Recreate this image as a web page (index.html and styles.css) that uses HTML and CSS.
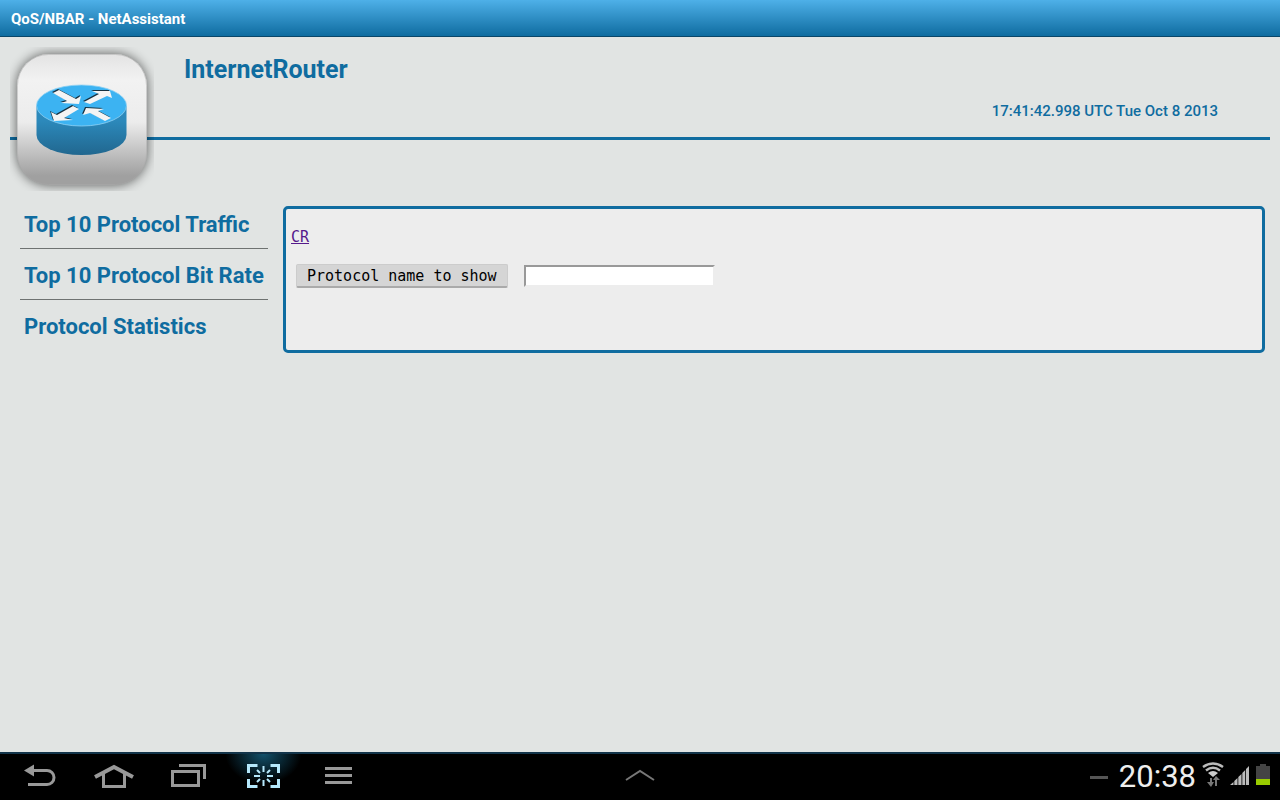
FILE: index.html
```html
<!DOCTYPE html>
<html lang="en">
<head>
    <meta charset="UTF-8">
    <meta name="viewport" content="width=device-width, initial-scale=1.0">
    <title>QoS/NBAR - NetAssistant</title>
    <link rel="stylesheet" href="styles.css">
</head>
<body>
    <div class="title-bar">QoS/NBAR - NetAssistant</div>

    <header class="page-header">
        <svg class="logo" width="144" height="144" viewBox="0 0 144 144" aria-hidden="true">
            <defs>
                <linearGradient id="tile" x1="0" y1="0" x2="0" y2="1">
                    <stop offset="0" stop-color="#e3e3e3"/>
                    <stop offset="0.2" stop-color="#f2f2f2"/>
                    <stop offset="0.52" stop-color="#ececec"/>
                    <stop offset="0.93" stop-color="#a0a0a0"/>
                    <stop offset="1" stop-color="#a0a0a0"/>
                </linearGradient>
                <linearGradient id="side" x1="0" y1="0" x2="0" y2="1">
                    <stop offset="0.3" stop-color="#2c89bb"/>
                    <stop offset="1" stop-color="#21678f"/>
                </linearGradient>
                <filter id="shadow" x="-20%" y="-20%" width="140%" height="140%">
                    <feGaussianBlur stdDeviation="6"/>
                </filter>
            </defs>
            <rect x="7" y="7" width="130" height="131" rx="32" fill="#000" opacity="0.6" filter="url(#shadow)"/>
            <rect x="7" y="7" width="130" height="131" rx="32" fill="url(#tile)"/>
            <rect x="7.500" y="7.500" width="129" height="130" rx="31" fill="none" stroke="#aaa" stroke-opacity="0.5"/>
            <path d="M26.500 59V88A45 20 0 0 0 116.500 88V59Z" fill="url(#side)"/>
            <ellipse cx="71.500" cy="58.500" rx="45" ry="20.500" fill="#3cb3f2" stroke="#8fd0f3" stroke-width="0.800"/>
            <g fill="#16303f" transform="translate(-1 -1)">
                <path d="M43 46L49 43L66 52L71 49L69 57L51 56L57 54Z"/>
                <path d="M74 55L89 47L82 44H100L102 51L97 49L80 57Z"/>
                <path d="M63 59L69 62L54 71L63 73L44 74L41 65L47 68Z"/>
                <path d="M73 68L76 61L94 62L88 64L101 71L95 74L80 66Z"/>
            </g>
            <g fill="#f4f4f4">
                <path d="M43 46L49 43L66 52L71 49L69 57L51 56L57 54Z"/>
                <path d="M74 55L89 47L82 44H100L102 51L97 49L80 57Z"/>
                <path d="M63 59L69 62L54 71L63 73L44 74L41 65L47 68Z"/>
                <path d="M73 68L76 61L94 62L88 64L101 71L95 74L80 66Z"/>
            </g>
        </svg>
        <h1>InternetRouter</h1>
        <p class="clock">17:41:42.998 UTC Tue Oct 8 2013</p>
    </header>

    <div class="content">
        <nav class="side-menu">
            <a href="#traffic">Top 10 Protocol Traffic</a>
            <a href="#bitrate">Top 10 Protocol Bit Rate</a>
            <a href="#statistics">Protocol Statistics</a>
        </nav>

        <main class="panel">
            <a class="cr-link" href="#cr">CR</a>
            <form class="protocol-form">
                <button type="button" id="showProtocol">Protocol name to show</button>
                <input type="text" name="protocol" aria-labelledby="showProtocol">
            </form>
        </main>
    </div>

    <footer class="system-bar">
        <div class="nav-buttons">
            <button type="button" aria-label="Back">
                <svg width="40" height="30" viewBox="0 0 40 30">
                    <path d="M14 9.500H28A7 7 0 0 1 28 23.500H9" fill="none" stroke="#999" stroke-width="3"/>
                    <path d="M5 9.500L15 3.500V15.500Z" fill="#999"/>
                </svg>
            </button>
            <button type="button" aria-label="Home">
                <svg width="40" height="30" viewBox="0 0 40 30">
                    <path d="M1 16L20 6L39 16" fill="none" stroke="#999" stroke-width="4"/>
                    <path d="M9.500 12V25.500H30.500V12" fill="none" stroke="#999" stroke-width="3"/>
                </svg>
            </button>
            <button type="button" aria-label="Recent apps">
                <svg width="40" height="30" viewBox="0 0 40 30">
                    <path d="M10 4.500H35.500V18" fill="none" stroke="#999" stroke-width="3"/>
                    <rect x="3.500" y="10.500" width="26" height="14" fill="none" stroke="#999" stroke-width="3"/>
                </svg>
            </button>
            <button type="button" class="active" aria-label="Screenshot">
                <svg width="40" height="30" viewBox="0 0 40 30" fill="none" stroke="#b5e8fb">
                    <path d="M4.500 12V4.500H13.500M26.500 4.500H34.500V12M34.500 18V25.500H26.500M13.500 25.500H4.500V18" stroke-width="3"/>
                    <path d="M19.500 5V11M19.500 19V25M10 15H16M23 15H29" stroke-width="2"/>
                    <path d="M13 9L16 12M26 9L23 12M13 21L16 18M26 21L23 18" stroke-width="2"/>
                </svg>
            </button>
            <button type="button" aria-label="Menu">
                <svg width="40" height="30" viewBox="0 0 40 30">
                    <path d="M6 7.500H33M6 14.500H33M6 21.500H33" stroke="#999" stroke-width="3"/>
                </svg>
            </button>
        </div>
        <button type="button" class="expand" aria-label="Expand">
            <svg width="32" height="16" viewBox="0 0 32 16">
                <path d="M2 12L16 3L30 12" fill="none" stroke="#777" stroke-width="2"/>
            </svg>
        </button>
        <div class="status">
            <span class="dash"></span>
            <span class="time">20:38</span>
            <svg width="22" height="34" viewBox="0 0 22 34" fill="none" stroke="#bbb">
                <path d="M1 7Q11 0 21 7M4 10.500Q11 5 18 10.500" stroke-width="2.500"/>
                <path d="M6 13Q11 9 16 13L11 17Z" fill="#ccc" stroke="none"/>
                <path d="M9 18V25M14 26V19" stroke="#777" stroke-width="2"/>
                <path d="M5 22H12L9 27ZM11 20L14 16L18 20Z" fill="#777" stroke="none"/>
            </svg>
            <svg width="20" height="34" viewBox="0 0 20 34" fill="#bbb">
                <path d="M0 25L3.500 22V25ZM4.300 25V21L7.500 18V25ZM8.300 25V17L11.500 14V25ZM12.300 25V13L15.200 10V25ZM16 25V9L19 6V25Z"/>
            </svg>
            <svg width="14" height="34" viewBox="0 0 14 34">
                <path d="M0 6H4V4H10V6H14V25H0Z" fill="#444"/>
                <rect y="19" width="14" height="6" fill="#99cc00"/>
            </svg>
        </div>
    </footer>
</body>
</html>
```

FILE: styles.css
```css
:root {
    --blue: #0f6ca0;
    --background: #e1e4e3;
}

* {
    margin: 0;
    padding: 0;
    box-sizing: border-box;
}

body {
    display: flex;
    flex-direction: column;
    min-height: 100vh;
    background-color: var(--background);
    color: var(--blue);
    font-family: Roboto, sans-serif;
}

a {
    color: inherit;
    text-decoration: none;
}

.title-bar {
    padding: 10px 11px 8px;
    border-bottom: 1px solid #0a4669;
    background: linear-gradient(#4eb0e8, #0f6ca0);
    color: white;
    font-size: 15px;
    font-weight: bold;
    line-height: 18px;
}

/* the logo hangs over the header line */
.page-header {
    display: flex;
    margin: 10px 10px 0;
    border-bottom: 3px solid var(--blue);
}

.logo {
    display: block;
    margin-bottom: -54px;
}

h1 {
    margin-left: 30px;
    font-size: 25px;
    line-height: 46px;
}

.clock {
    margin-left: auto;
    align-self: flex-end;
    padding: 0 52px 15px 0;
    font-size: 15px;
    font-weight: 500;
    line-height: 22px;
}

.content {
    display: flex;
    flex: 1;
    align-items: flex-start;
    gap: 15px;
    padding: 66px 15px 0 20px;
}

.side-menu {
    display: flex;
    flex-direction: column;
    width: 248px;
}

.side-menu a {
    padding: 13px 4px 9px;
    border-bottom: 1px solid #6e7271;
    font-size: 22px;
    font-weight: bold;
    line-height: 28px;
    white-space: nowrap;
}

.side-menu a:first-child {
    padding-top: 5px;
}

.side-menu a:last-child {
    border-bottom: none;
}

.panel {
    flex: 1;
    padding: 18px 5px 62px;
    border: 3px solid var(--blue);
    border-radius: 5px;
    background-color: #ededed;
    font-family: "DejaVu Sans Mono", monospace;
}

.cr-link {
    display: inline-block;
    color: #551a8b;
    font-size: 15px;
    line-height: 20px;
    text-decoration: underline;
}

.protocol-form {
    display: flex;
    align-items: center;
    gap: 16px;
    margin: 17px 5px 0;
}

.protocol-form button {
    height: 24px;
    padding: 0 10px;
    border: 1px solid #ccc;
    border-bottom: 2px solid #aaa;
    border-radius: 2px;
    background-color: #d5d5d5;
    color: black;
    font: 15px "DejaVu Sans Mono", monospace;
}

.protocol-form input {
    width: 191px;
    height: 22px;
    border: 2px solid;
    border-color: #999 #ededed #ededed #999;
    background-color: white;
    font: 15px "DejaVu Sans Mono", monospace;
}

.system-bar {
    display: grid;
    grid-template-columns: 1fr auto 1fr;
    align-items: start;
    height: 48px;
    border-top: 2px solid #12344a;
    background-color: black;
}

.system-bar button {
    display: flex;
    align-items: center;
    justify-content: center;
    height: 44px;
    border: none;
    background: none;
}

.nav-buttons {
    display: flex;
    padding-left: 1px;
}

.nav-buttons button {
    width: 75px;
}

.nav-buttons .active {
    background: radial-gradient(ellipse 38px 30px at 50% 0, #12506a, transparent);
}

.status {
    display: flex;
    align-items: center;
    justify-content: flex-end;
    gap: 6px;
    padding-right: 10px;
}

.dash {
    width: 18px;
    height: 3px;
    margin-right: 5px;
    background-color: #555;
}

.time {
    color: #eee;
    font-size: 31px;
    line-height: 46px;
}
```
